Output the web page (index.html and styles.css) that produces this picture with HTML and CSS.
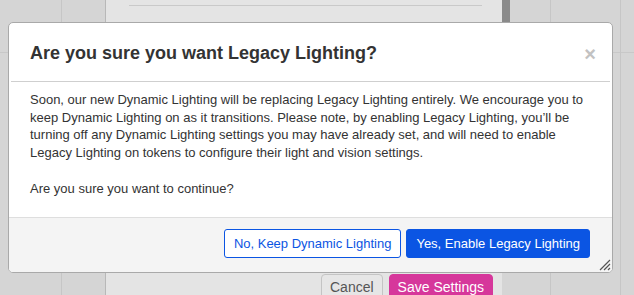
FILE: index.html
```html
<!DOCTYPE html>
<html lang="en">
<head>
    <meta charset="UTF-8">
    <title>Legacy Lighting</title>
    <link rel="stylesheet" href="styles.css">
</head>
<body>
    <div class="backdrop">
        <div class="col col-a"></div>
        <div class="col col-b"></div>
        <div class="panel">
            <div class="panel-rule"></div>
            <div class="panel-actions">
                <button class="btn-cancel">Cancel</button>
                <button class="btn-save">Save Settings</button>
            </div>
        </div>
        <div class="scrollbar"></div>
        <div class="col col-c"></div>
        <div class="col col-d"></div>
        <div class="col col-e"></div>
    </div>

    <div class="dialog">
        <div class="dialog-header">
            <h3 class="dialog-title">Are you sure you want Legacy Lighting?</h3>
            <span class="close">&times;</span>
        </div>
        <div class="dialog-body">
            <p>Soon, our new Dynamic Lighting will be replacing Legacy Lighting entirely. We encourage you to keep Dynamic Lighting on as it transitions. Please note, by enabling Legacy Lighting, you’ll be turning off any Dynamic Lighting settings you may have already set, and will need to enable Legacy Lighting on tokens to configure their light and vision settings.</p>
            <p>Are you sure you want to continue?</p>
        </div>
        <div class="dialog-footer">
            <button class="btn btn-outline">No, Keep Dynamic Lighting</button>
            <button class="btn btn-primary">Yes, Enable Legacy Lighting</button>
        </div>
        <svg class="grip" width="12" height="12" viewBox="0 0 12 12">
            <path d="M1 11 L11 1 M5 11 L11 5 M9 11 L11 9" stroke="#555" stroke-width="1.2" fill="none"/>
        </svg>
    </div>
</body>
</html>
```

FILE: styles.css
```css
body {
    margin: 0;
    background-color: #d5d5d5;
    font-family: "Liberation Sans", Arial, sans-serif;
    color: #333333;
    overflow: hidden;
}
.backdrop {
    display: flex;
    height: 295px;
}
.col {
    height: 100%;
    border-right: 1px solid #c6c6c6;
    background:
        linear-gradient(#c8c8c8, #c8c8c8) 0 52px / 100% 1px no-repeat,
        #d5d5d5;
}
.col-a { width: 61px; }
.col-b { width: 43px; background: #d5d5d5; border-right: 1px solid #b8b8b8; }
.col-c { width: 40px; }
.col-d { width: 69px; }
.col-e { flex: 1; border-right: none; }
.panel {
    width: 396px;
    background-color: #e4e4e4;
    display: flex;
    flex-direction: column;
}
.panel-rule {
    margin: 5px 20px 0 23px;
    border-top: 1px solid #c9c9c9;
}
.panel-actions {
    margin-top: auto;
    padding-left: 215px;
    display: flex;
    gap: 6px;
    height: 21px;
}
.panel-actions button {
    font-family: "Liberation Sans", Arial, sans-serif;
    font-size: 14px;
    line-height: 16px;
    height: 26px;
    padding: 0 8px;
    border-radius: 4px 4px 0 0;
    white-space: nowrap;
    flex: none;
}
.btn-cancel {
    background-color: #e6e6e6;
    border: 1px solid #c4c4c4;
    color: #555;
}
.btn-save {
    background-color: #d6379b;
    border: 1px solid #d6379b;
    color: #ffffff;
}
.scrollbar {
    width: 8px;
    background-color: #8a8a8a;
    height: 22px;
}
.dialog {
    position: absolute;
    left: 8px;
    top: 22px;
    width: 603px;
    height: 249px;
    background-color: #ffffff;
    border: 1px solid #a9a9a9;
    border-radius: 5px;
    display: flex;
    flex-direction: column;
    overflow: hidden;
}
.dialog-header {
    height: 58px;
    margin: 0 2px;
    border-bottom: 1px solid #cfcfcf;
    display: flex;
    align-items: center;
    justify-content: space-between;
    padding: 0 14px 0 19px;
}
.dialog-title {
    margin: 2px 0 0;
    font-size: 18px;
    font-weight: bold;
    color: #333333;
}
.close {
    font-size: 20px;
    font-weight: bold;
    color: #c2c2c2;
    margin-top: 4px;
}
.dialog-body {
    flex: 1;
    padding: 9px 22px 0 21px;
    font-size: 13px;
    line-height: 17.7px;
}
.dialog-body p {
    margin: 0 0 17.7px;
}
.dialog-footer {
    height: 55px;
    background-color: #f4f4f4;
    border-top: 1px solid #dedede;
    display: flex;
    justify-content: flex-end;
    align-items: flex-start;
    gap: 5px;
    padding: 11px 22px 0 0;
    box-sizing: border-box;
}
.btn {
    font-family: "Liberation Sans", Arial, sans-serif;
    font-size: 13px;
    height: 29px;
    padding: 0 9px;
    border-radius: 3px;
}
.btn-outline {
    background-color: #ffffff;
    border: 1px solid #0b55e3;
    color: #0b55e3;
}
.btn-primary {
    background-color: #0b55e3;
    border: 1px solid #0b55e3;
    color: #ffffff;
}
.grip {
    position: absolute;
    right: 1px;
    bottom: 1px;
}
```
